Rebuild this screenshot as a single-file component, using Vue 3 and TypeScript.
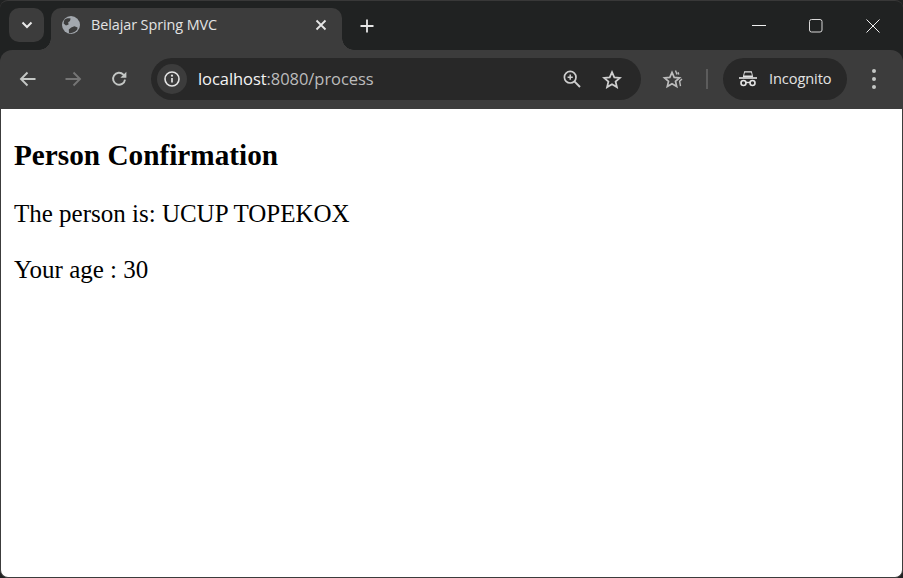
<script setup lang="ts">
const title = 'Belajar Spring MVC'
const host = 'localhost'
const path = ':8080/process'
</script>

<template>
  <div class="win">
    <header class="strip">
      <button class="switcher" aria-label="Search tabs">
        <svg width="12" height="8" viewBox="0 0 12 8"><path d="M1.500 1.500 6 6l4.500-4.500" fill="none" stroke="#e8e8e8" stroke-width="2"/></svg>
      </button>
      <div class="tab">
        <svg class="globe" width="18" height="18" viewBox="0 0 18 18">
          <circle cx="9" cy="9" r="9" fill="#a3a8ae"/>
          <path d="M2.600 3.400C5 2 7 2 8.600 2.600L8 5 6.200 6.200 6.600 8.600 4 9.400 1.600 7.400C1.800 5.800 2 4.600 2.600 3.400ZM7 17 6.800 13.600 9.200 11.400 12.400 10.200 15.600 11.400 15.200 13.600C13.600 16 10 17.600 7 17Z" fill="#3c3c3c"/>
        </svg>
        <span class="tab-title">{{ title }}</span>
        <svg class="tab-x" width="12" height="12" viewBox="0 0 12 12"><path d="M1.500 1.500l9 9m0-9-9 9" stroke="#e6e6e6" stroke-width="1.800"/></svg>
      </div>
      <svg class="plus" width="14" height="14" viewBox="0 0 14 14"><path d="M7 .5v13M.5 7h13" stroke="#e6e6e6" stroke-width="1.800"/></svg>
      <div class="controls">
        <svg width="14" height="14" viewBox="0 0 14 14"><path d="M0 6.500h14" stroke="#f0f0f0" stroke-width="1"/></svg>
        <svg width="14" height="14" viewBox="0 0 14 14"><rect x=".5" y=".5" width="12.500" height="12.500" rx="2" fill="none" stroke="#d8d8d8" stroke-width="1"/></svg>
        <svg width="14" height="14" viewBox="0 0 14 14"><path d="M.5.5l13 13m0-13-13 13" stroke="#f0f0f0" stroke-width="1"/></svg>
      </div>
    </header>

    <nav class="bar">
      <svg class="nav back" width="18" height="16" viewBox="0 0 18 16"><path d="M16.500 8H2.500M8.500 1.500 2 8l6.500 6.500" fill="none" stroke="#c4c7c5" stroke-width="1.900"/></svg>
      <svg class="nav fwd" width="18" height="16" viewBox="0 0 18 16"><path d="M1.500 8h14M9.500 1.500 16 8l-6.500 6.500" fill="none" stroke="#757575" stroke-width="1.900"/></svg>
      <svg class="nav reload" width="16" height="16" viewBox="0 0 16 16"><path d="M14 8.600A6 6 0 1 1 12.400 3.600L14.200 5.400" fill="none" stroke="#c4c7c5" stroke-width="1.900"/><path d="M15.400 .8v6h-6z" fill="#c4c7c5"/></svg>

      <div class="omni">
        <span class="chip">
          <svg width="16" height="16" viewBox="0 0 16 16"><circle cx="8" cy="8" r="7" fill="none" stroke="#e4e4e4" stroke-width="1.600"/><path d="M8 7v4.600" stroke="#e4e4e4" stroke-width="1.700"/><circle cx="8" cy="4.700" r="1.100" fill="#e4e4e4"/></svg>
        </span>
        <span class="url"><span class="host">{{ host }}</span><span class="path">{{ path }}</span></span>
        <svg class="zoom" width="18" height="18" viewBox="0 0 18 18"><circle cx="7.200" cy="7.200" r="5.800" fill="none" stroke="#cfcfcf" stroke-width="1.700"/><path d="M11.400 11.400 17 17" stroke="#cfcfcf" stroke-width="1.900"/><path d="M7.200 4.600v5.200M4.600 7.200h5.200" stroke="#cfcfcf" stroke-width="1.500"/></svg>
        <svg class="star" width="20" height="19" viewBox="0 0 20 19"><path d="M10 2.200l2.300 5.200 5.600.5-4.300 3.700 1.300 5.500L10 14.200l-4.900 2.900 1.300-5.500L2.100 7.900l5.600-.5z" fill="none" stroke="#cfcfcf" stroke-width="1.800"/></svg>
      </div>

      <svg class="ext" width="22" height="20" viewBox="0 0 22 20"><path d="M10 3.400l2.200 5 5.300.5-4 3.500 1.200 5.200-4.700-2.800-4.700 2.800 1.200-5.200-4-3.500 5.300-.5z" fill="none" stroke="#bdbdbd" stroke-width="1.700"/><path d="M13.500 1.500l1.500 4M16 3.200l.8 2.300M20 10l-2.400 2.200.9 5" fill="none" stroke="#bdbdbd" stroke-width="1.400"/></svg>
      <span class="sep"></span>
      <div class="pill">
        <svg width="18" height="17" viewBox="0 0 18 17"><path d="M5.200 1.200h7.600l1.400 6H3.800z" fill="#e4e4e4"/><path d="M5.800 2.600h6.400l.7 3H5.100z" fill="#282828"/><path d="M0 8h18" stroke="#e4e4e4" stroke-width="1.600"/><circle cx="4.500" cy="13" r="2.500" fill="none" stroke="#e4e4e4" stroke-width="1.600"/><circle cx="13.500" cy="13" r="2.500" fill="none" stroke="#e4e4e4" stroke-width="1.600"/><path d="M7 12.500h4" stroke="#e4e4e4" stroke-width="1.400"/></svg>
        <span class="pill-label">Incognito</span>
      </div>
      <span class="dots"><i></i><i></i><i></i></span>
    </nav>

    <main class="page">
      <h3>Person Confirmation</h3>
      <p>The person is: UCUP TOPEKOX</p>
      <p>Your age : 30</p>
    </main>
  </div>
</template>

<style>
html, body { margin: 0; background: #202222; }
</style>

<style scoped>
.win { width: 903px; height: 578px; display: flex; flex-direction: column; overflow: hidden; background: #202222; font-family: "Open Sans", "Noto Sans", sans-serif; box-sizing: border-box; }
.strip { height: 50px; flex: none; display: flex; box-sizing: border-box; padding: 8px 0 0 9px; background: #202222; border-radius: 8px 8px 0 0; border-top: 1px solid #383838; }
.switcher { width: 35px; height: 34px; padding: 0; border: 0; border-radius: 10px; background: #3c3c3c; display: flex; align-items: center; justify-content: center; margin-top: -1px; }
.tab { position: relative; margin-left: 7px; margin-top: -1px; width: 291px; height: 42px; box-sizing: border-box; padding: 0 15px 8px 11px; background: #3c3c3c; border-radius: 10px 10px 0 0; display: flex; align-items: center; color: #e3e3e3; font-size: 14.400px; letter-spacing: -0.08px; }
.tab::before, .tab::after { content: ""; position: absolute; bottom: 0; width: 12px; height: 12px; }
.tab::before { left: -12px; background: radial-gradient(circle at 0 0, transparent 11.500px, #3c3c3c 12px); }
.tab::after { right: -12px; background: radial-gradient(circle at 100% 0, transparent 11.500px, #3c3c3c 12px); }
.globe { flex: none; }
.tab-title { margin-left: 11px; flex: 1; white-space: nowrap; margin-top: -1px; }
.tab-x { flex: none; }
.plus { margin: 10px 0 0 18px; flex: none; }
.controls { margin-left: auto; display: flex; gap: 43px; padding: 10px 23px 0 0; height: 14px; }

.bar { height: 59px; flex: none; box-sizing: border-box; background: #3c3c3c; border-radius: 12px 12px 0 0; display: flex; align-items: center; padding: 0 0 1px 19px; }
.nav { flex: none; }
.fwd { margin-left: 27px; }
.reload { margin-left: 29px; }
.omni { margin-left: 24px; width: 490px; height: 42px; box-sizing: border-box; border-radius: 21px; background: #282828; display: flex; align-items: center; padding: 0 19px 0 6px; }
.chip { width: 30px; height: 30px; flex: none; border-radius: 50%; background: #3c3c3c; display: flex; align-items: center; justify-content: center; }
.url { margin-left: 11px; flex: 1; font-size: 16.500px; letter-spacing: -0.06px; white-space: nowrap; margin-top: -1px; }
.host { color: #f4f4f4; }
.path { color: #bcbcbc; }
.zoom { flex: none; }
.star { flex: none; margin-left: 21px; }
.ext { flex: none; margin-left: 21px; }
.sep { width: 2px; height: 20px; flex: none; background: #5c5c5c; margin-left: 22px; }
.pill { margin-left: 15px; width: 124px; height: 42px; box-sizing: border-box; border-radius: 21px; background: #282828; display: flex; align-items: center; gap: 12px; padding-left: 16px; color: #e3e3e3; font-size: 14.600px; letter-spacing: -0.1px; margin-top: -1px; }
.pill-label { margin-top: -2px; }
.dots { margin-left: 25px; display: flex; flex-direction: column; gap: 4px; }
.dots i { display: block; width: 4px; height: 4px; border-radius: 50%; background: #c4c7c5; }

.page { flex: 1; box-sizing: border-box; background: #fff; border: 1px solid #3c3c3c; border-top: 0; border-radius: 0 0 8px 8px; padding: 12px 13px; color: #000; font-family: "Liberation Serif", "Times New Roman", serif; }
h3 { margin: 18px 0 0; font-size: 29.250px; font-weight: 700; line-height: 32px; }
p { margin: 0; font-size: 25px; line-height: 27px; }
h3 + p { margin-top: 29px; }
p + p { margin-top: 29px; }
</style>
